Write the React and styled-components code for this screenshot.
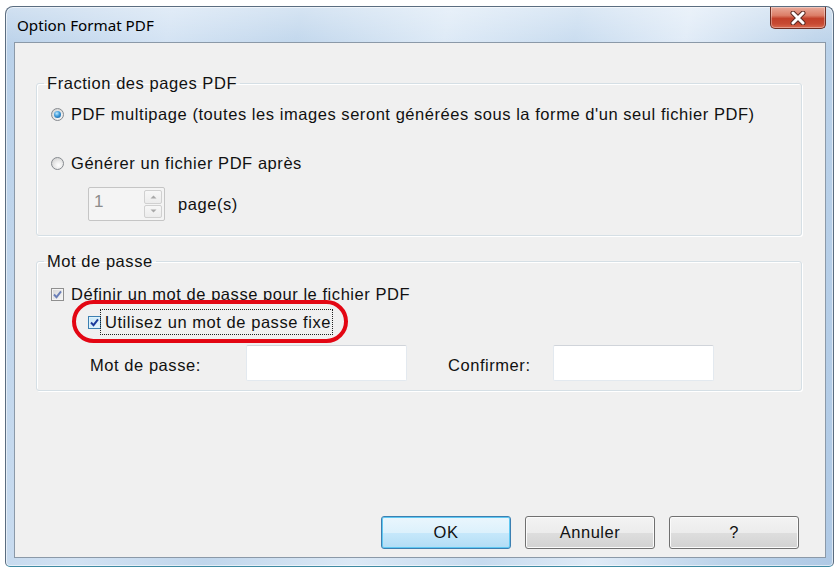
import React from "react";
import styled, { createGlobalStyle, css } from "styled-components";

const GlobalStyle = createGlobalStyle`
  html, body { margin: 0; padding: 0; background: #ffffff; }
  body { width: 837px; height: 568px; overflow: hidden; }
  * { box-sizing: border-box; }
`;

const Window = styled.div`
  margin: 6px 0 0 5px;
  width: 829px;
  height: 561px;
  display: flex;
  flex-direction: column;
  border: 1px solid #5b6d80;
  border-bottom-color: #3f8aa3;
  border-radius: 8px 8px 5px 5px;
  padding: 0 7px 8px 8px;
  background:
    linear-gradient(180deg, rgba(255,255,255,0.35) 0%, rgba(255,255,255,0) 40px),
    linear-gradient(100deg, #b8d0e9 0%, #d2e2f3 18%, #c0d6ec 32%, #dce9f6 48%, #c7dbef 62%, #e0ebf7 74%, #bcd3ea 88%, #afc9e5 100%);
  box-shadow: inset 0 0 0 1px rgba(255,255,255,0.55);
`;

const TitleBar = styled.div`
  height: 35px;
  display: flex;
  align-items: flex-start;
  justify-content: space-between;
  margin: 0 -7px 0 -8px;
  padding-left: 11px;
`;

const Title = styled.div`
  font-family: "Noto Sans", "Open Sans", sans-serif;
  font-size: 15.2px;
  line-height: 35px;
  color: #000;
  margin-top: 1px;
`;

const CloseButton = styled.div`
  width: 56px;
  height: 22px;
  margin-right: 7px;
  border: 1px solid #6e2d22;
  border-top: none;
  border-radius: 0 0 5px 5px;
  display: flex;
  align-items: center;
  justify-content: center;
  background: linear-gradient(180deg, #e9aa9a 0%, #dc7e68 40%, #c2402a 55%, #c74a33 80%, #d96a4f 100%);
  box-shadow: inset 0 0 0 1px rgba(255,255,255,0.35);
`;

const Client = styled.div`
  flex: 1;
  display: flex;
  flex-direction: column;
  background: #f0f0f0;
  border: 1px solid #8b99a8;
  padding: 31px 23px 8px 21px;
  font-family: "Liberation Sans", Arial, sans-serif;
  font-size: 16.5px;
  letter-spacing: 0.55px;
  color: #111;
`;

const Group = styled.fieldset`
  margin: ${(p) => p.$mt || 0}px 0 0 0;
  padding: 0;
  min-width: 0;
  border: 1px solid #d5dfe5;
  border-radius: 3px;
  box-shadow: inset 1px 1px 0 #ffffff, 1px 1px 0 #ffffff;
`;

const Legend = styled.legend`
  margin-left: 7px;
  padding: 0 3px;
  font-size: 16.5px;
  line-height: 18px;
  color: #111;
`;

const GroupBody = styled.div`
  padding: ${(p) => p.$pt}px 0 ${(p) => p.$pb}px 14px;
  display: flex;
  flex-direction: column;
`;

const OptionRow = styled.div`
  position: relative;
  display: flex;
  align-items: center;
  gap: 7px;
  height: 20px;
  margin-top: ${(p) => p.$mt || 0}px;
  padding-left: ${(p) => p.$indent || 0}px;
`;

const Radio = styled.span`
  position: relative;
  flex: none;
  width: 13px;
  height: 13px;
  border-radius: 50%;
  border: 1px solid #868a8f;
  background: radial-gradient(circle at 60% 65%, #ffffff 0%, #eeeeee 35%, #c8c8c8 100%);
  ${(p) =>
    p.$checked &&
    css`
      &::after {
        content: "";
        position: absolute;
        left: 2px;
        top: 2px;
        width: 7px;
        height: 7px;
        border-radius: 50%;
        background: radial-gradient(circle at 40% 35%, #bfeaff 0%, #3f9ad8 45%, #10508f 100%);
      }
    `}
`;

const Checkbox = styled.span`
  flex: none;
  width: 13px;
  height: 13px;
  display: flex;
  align-items: center;
  justify-content: center;
  border: 1px solid ${(p) => (p.$hot ? "#3c7fb1" : "#8f8f8f")};
  background: ${(p) =>
    p.$hot
      ? "linear-gradient(135deg, #c5e6f7 0%, #eaf6fd 100%)"
      : "linear-gradient(135deg, #d6d6d6 0%, #f8f8f8 100%)"};
  box-shadow: inset 0 0 0 1px ${(p) => (p.$hot ? "#def2fc" : "#f4f4f4")};
`;

const OptionLabel = styled.span`
  line-height: 20px;
  white-space: nowrap;
  ${(p) =>
    p.$focus &&
    css`
      outline: 1px dotted #222;
      outline-offset: 1px;
      margin-left: -6px;
      padding-left: 3px;
      line-height: 22px;
    `}
`;

const Highlight = styled.span`
  position: absolute;
  left: 21px;
  top: -12px;
  width: 276px;
  height: 43px;
  border: 4px solid #e30613;
  border-radius: 22px;
  pointer-events: none;
`;

const SpinRow = styled.div`
  display: flex;
  align-items: center;
  gap: 13px;
  margin-top: ${(p) => p.$mt}px;
  padding-left: ${(p) => p.$indent}px;
`;

const Spinner = styled.div`
  width: 77px;
  height: 34px;
  display: flex;
  border: 1px solid #c5c5c5;
  border-radius: 2px;
  background: #f4f4f4;
  padding: 2px;
`;

const SpinValue = styled.div`
  flex: 1;
  color: #8c8c8c;
  padding-left: 3px;
  line-height: 24px;
  font-size: 17px;
`;

const SpinButtons = styled.div`
  width: 18px;
  display: flex;
  flex-direction: column;
  gap: 1px;
`;

const SpinButton = styled.div`
  flex: 1;
  display: flex;
  align-items: center;
  justify-content: center;
  border: 1px solid #d0d0d0;
  border-radius: 2px;
  background: linear-gradient(180deg, #f7f7f7, #ececec);
`;

const FieldRow = styled.div`
  display: flex;
  align-items: center;
  height: 36px;
  margin-top: ${(p) => p.$mt}px;
  padding-left: 39px;
`;

const FieldLabel = styled.span`
  width: ${(p) => p.$w}px;
  flex: none;
  white-space: nowrap;
  padding-top: 4px;
`;

const TextBox = styled.div`
  width: 161px;
  height: 36px;
  flex: none;
  background: #ffffff;
  border: 1px solid #e3e9ef;
  border-top-color: #d0d4da;
  border-radius: 2px;
  margin-right: ${(p) => p.$mr || 0}px;
`;

const Spacer = styled.div`
  flex: 1;
`;

const ButtonBar = styled.div`
  display: flex;
  justify-content: flex-end;
  gap: 14px;
  margin-right: 3px;
`;

const DialogButton = styled.div`
  width: 130px;
  height: 33px;
  display: flex;
  align-items: center;
  justify-content: center;
  border-radius: 3px;
  color: #111;
  border: 1px solid ${(p) => (p.$default ? "#3c7fb1" : "#707070")};
  background: ${(p) =>
    p.$default
      ? "linear-gradient(180deg, #eaf6fd 0%, #dcf1fc 50%, #c6e8fb 51%, #b2ddf5 100%)"
      : "linear-gradient(180deg, #f3f3f3 0%, #ececec 50%, #dedede 51%, #d2d2d2 100%)"};
  box-shadow: inset 0 0 0 1px ${(p) => (p.$default ? "#5fc8f2" : "#fbfbfb")};
`;

const CheckMark = ({ color }) => (
  <svg width="9" height="9" viewBox="0 0 9 9">
    <path d="M1 4.5 L3.5 7.2 L8 1.3" fill="none" stroke={color} strokeWidth="1.9" />
  </svg>
);

const CloseGlyph = () => (
  <svg width="18" height="14" viewBox="0 0 18 14">
    <path d="M4 2 L14 12 M14 2 L4 12" stroke="#5a2a22" strokeWidth="5" strokeLinecap="round" />
    <path d="M4 2 L14 12 M14 2 L4 12" stroke="#ffffff" strokeWidth="3" strokeLinecap="round" />
  </svg>
);

const Arrow = ({ up }) => (
  <svg width="7" height="4" viewBox="0 0 7 4">
    <path d={up ? "M0.5 3.5 L3.5 0.5 L6.5 3.5 Z" : "M0.5 0.5 L3.5 3.5 L6.5 0.5 Z"} fill="#a8a8a8" />
  </svg>
);

export default function App() {
  return (
    <>
      <GlobalStyle />
      <Window>
        <TitleBar>
          <Title>Option Format PDF</Title>
          <CloseButton>
            <CloseGlyph />
          </CloseButton>
        </TitleBar>
        <Client>
          <Group>
            <Legend>Fraction des pages PDF</Legend>
            <GroupBody $pt={12} $pb={14}>
              <OptionRow>
                <Radio $checked />
                <OptionLabel>
                  PDF multipage (toutes les images seront générées sous la forme d'un seul fichier PDF)
                </OptionLabel>
              </OptionRow>
              <OptionRow $mt={29}>
                <Radio />
                <OptionLabel>Générer un fichier PDF après</OptionLabel>
              </OptionRow>
              <SpinRow $mt={14} $indent={37}>
                <Spinner>
                  <SpinValue>1</SpinValue>
                  <SpinButtons>
                    <SpinButton>
                      <Arrow up />
                    </SpinButton>
                    <SpinButton>
                      <Arrow />
                    </SpinButton>
                  </SpinButtons>
                </Spinner>
                <span>page(s)</span>
              </SpinRow>
            </GroupBody>
          </Group>
          <Group $mt={16}>
            <Legend>Mot de passe</Legend>
            <GroupBody $pt={14} $pb={9}>
              <OptionRow>
                <Checkbox>
                  <CheckMark color="#6a7fb8" />
                </Checkbox>
                <OptionLabel>Définir un mot de passe pour le fichier PDF</OptionLabel>
              </OptionRow>
              <OptionRow $mt={8} $indent={37}>
                <Highlight />
                <Checkbox $hot>
                  <CheckMark color="#1c3a9c" />
                </Checkbox>
                <OptionLabel $focus>Utilisez un mot de passe fixe</OptionLabel>
              </OptionRow>
              <FieldRow $mt={13}>
                <FieldLabel $w={156}>Mot de passe:</FieldLabel>
                <TextBox $mr={41} />
                <FieldLabel $w={105}>Confirmer:</FieldLabel>
                <TextBox />
              </FieldRow>
            </GroupBody>
          </Group>
          <Spacer />
          <ButtonBar>
            <DialogButton $default>OK</DialogButton>
            <DialogButton>Annuler</DialogButton>
            <DialogButton>?</DialogButton>
          </ButtonBar>
        </Client>
      </Window>
    </>
  );
}
